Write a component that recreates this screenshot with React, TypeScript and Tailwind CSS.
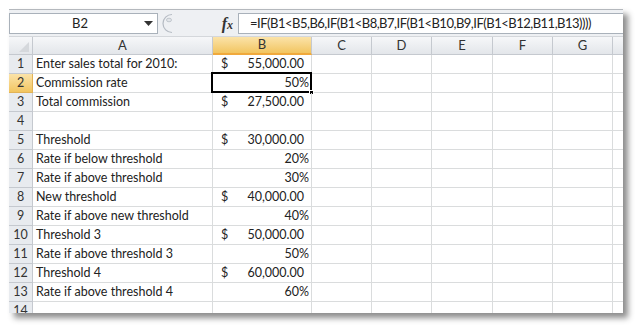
import React from 'react';

type Row = { a: string; dollar?: boolean; b: string; pct?: boolean };

const ROWS: Row[] = [
  { a: 'Enter sales total for 2010:', dollar: true, b: '55,000.00' },
  { a: 'Commission rate', b: '50%', pct: true },
  { a: 'Total commission', dollar: true, b: '27,500.00' },
  { a: '', b: '' },
  { a: 'Threshold', dollar: true, b: '30,000.00' },
  { a: 'Rate if below threshold', b: '20%', pct: true },
  { a: 'Rate if above threshold', b: '30%', pct: true },
  { a: 'New threshold', dollar: true, b: '40,000.00' },
  { a: 'Rate if above new threshold', b: '40%', pct: true },
  { a: 'Threshold 3', dollar: true, b: '50,000.00' },
  { a: 'Rate if above threshold 3', b: '50%', pct: true },
  { a: 'Threshold 4', dollar: true, b: '60,000.00' },
  { a: 'Rate if above threshold 4', b: '60%', pct: true },
  { a: '', b: '' },
];

const COLS = ['C', 'D', 'E', 'F', 'G'];
const COLW = ['w-[60px]', 'w-[60px]', 'w-[61px]', 'w-[60px]', 'w-[60px]'];

export default function App() {
  return (
    <div className="w-[640px] h-[329px] bg-white overflow-hidden pt-[9px] pl-[9px]"
      style={{ fontFamily: 'Lato, "Liberation Sans", sans-serif' }}>
      <div className="w-[614px] h-[304px] overflow-hidden bg-white border-t border-[#b4b8bd] shadow-[5px_5px_6px_rgba(0,0,0,0.45)] flex flex-col">

        {/* Formula bar */}
        <div className="h-[27px] bg-[#eef0f3] flex items-start pt-[3px] border-b border-[#d4d7db] shrink-0">
          <div className="w-[149px] h-[21px] shrink-0 bg-white border border-[#a9b1ba] flex items-center text-[13px] text-[#222]">
            <span className="flex-1 text-center pl-[6px]">B2</span>
            <svg width="9" height="5" viewBox="0 0 9 5" className="mr-[4px]"><path d="M0 0h9L4.5 5z" fill="#333" /></svg>
          </div>
          <svg width="26" height="21" viewBox="0 0 26 21" className="ml-[1px] shrink-0">
            <path d="M13 1.5a9 9 0 0 0 0 18" fill="none" stroke="#b5bbc3" strokeWidth="1.2" />
            <ellipse cx="10" cy="7" rx="2.5" ry="1.8" fill="#e2e5e9" stroke="#b5bbc3" strokeWidth="0.8" />
          </svg>
          <div className="w-[53px] h-[21px] shrink-0 flex items-center justify-end pr-[5px] text-[16px] italic text-[#333]"
            style={{ fontFamily: '"Liberation Serif", serif' }}>
            <span className="font-bold">f</span><span className="text-[12px] mt-[3px] font-bold">x</span>
          </div>
          <div className="flex-1 min-w-0 overflow-hidden h-[21px] bg-white border border-r-0 border-[#a9b1ba] flex items-center pl-[11px] text-[13px] tracking-[-0.5px] text-[#222] whitespace-nowrap">
            =IF(B1&lt;B5,B6,IF(B1&lt;B8,B7,IF(B1&lt;B10,B9,IF(B1&lt;B12,B11,B13))))
          </div>
        </div>

        {/* Column headers */}
        <div className="h-[18px] flex shrink-0 text-[13px] text-[#333]">
          <div className="w-[24px] h-full bg-gradient-to-b from-[#f6f7f9] to-[#e3e6ea] border-r border-b border-[#c5c9cf] relative shrink-0">
            <svg width="10" height="10" viewBox="0 0 10 10" className="absolute right-[3px] bottom-[2px]"><path d="M10 0V10H0z" fill="#d5d8dc" /></svg>
          </div>
          <div className="w-[180px] h-full bg-gradient-to-b from-[#f6f7f9] to-[#e3e6ea] border-r border-b border-[#c5c9cf] flex items-center justify-center shrink-0">A</div>
          <div className="w-[99px] h-full bg-gradient-to-b from-[#fbe3a8] to-[#f2c55f] border-r border-[#c5c9cf] border-b-2 border-b-[#f0a93c] flex items-center justify-center shrink-0">B</div>
          {COLS.map((c, i) => (
            <div key={c} className={`${COLW[i]} h-full bg-gradient-to-b from-[#f6f7f9] to-[#e3e6ea] border-r border-b border-[#c5c9cf] flex items-center justify-center shrink-0`}>{c}</div>
          ))}
          <div className="flex-1 h-full bg-gradient-to-b from-[#f6f7f9] to-[#e3e6ea] border-b border-[#c5c9cf]" />
        </div>

        {/* Rows */}
        {ROWS.map((r, i) => {
          const sel = i === 1;
          return (
            <div key={i} className="h-[19px] flex shrink-0 text-[12.5px] text-[#222]">
              <div className={`w-[24px] h-full border-r border-b flex items-center justify-center shrink-0 text-[#333] ${sel ? 'bg-gradient-to-b from-[#fbe3a8] to-[#f2c55f] border-[#e2b357]' : 'bg-[#e8ebef] border-[#c5c9cf]'}`}>
                {i + 1}
              </div>
              <div className="w-[180px] h-full border-r border-b border-[#dadcdd] flex items-center pl-[3px] whitespace-nowrap shrink-0">{r.a}</div>
              <div className="w-[99px] h-full border-r border-b border-[#dadcdd] flex items-center shrink-0 relative">
                {sel && (
                  <div className="absolute left-[-2px] top-[-2px] w-[101px] h-[21px] border-2 border-black">
                    <div className="absolute right-[-4px] bottom-[-4px] w-[5px] h-[5px] bg-black border border-white" />
                  </div>
                )}
                {r.dollar && <span className="pl-[8px]">$</span>}
                <span className={`ml-auto ${r.pct ? 'pr-[2px]' : 'pr-[7px]'}`}>{r.b}</span>
              </div>
              {COLS.map((c, j) => (
                <div key={c} className={`${COLW[j]} h-full border-r border-b border-[#dadcdd] shrink-0`} />
              ))}
              <div className="flex-1 h-full border-b border-[#dadcdd]" />
            </div>
          );
        })}
      </div>
    </div>
  );
}
